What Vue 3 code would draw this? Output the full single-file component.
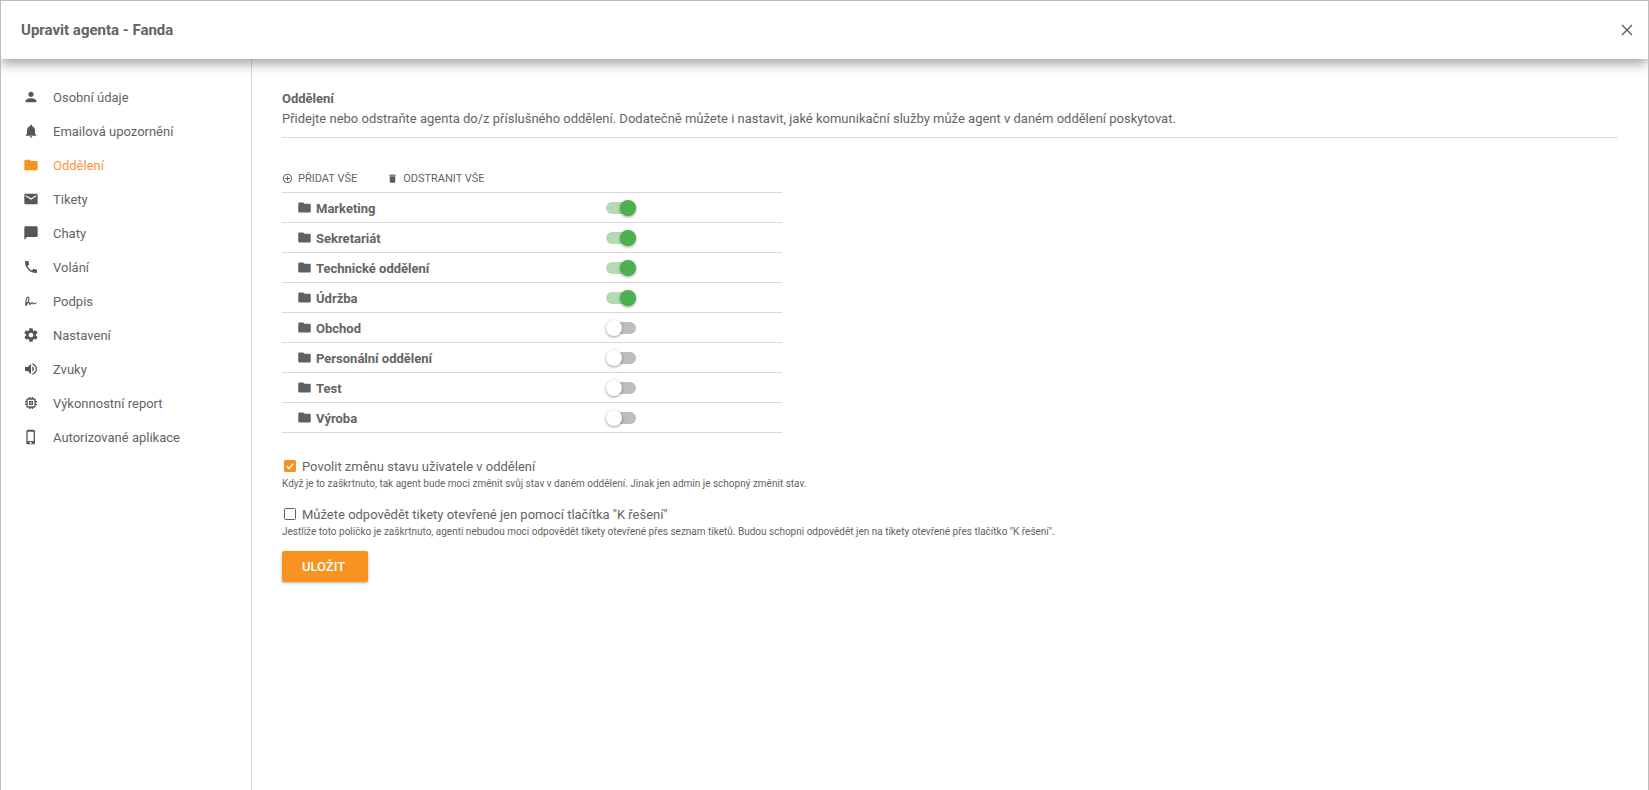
<script setup>
const nav = [
  { label: 'Osobní údaje', d: 'M12 12c2.2 0 4-1.8 4-4s-1.8-4-4-4-4 1.8-4 4 1.8 4 4 4zm0 2c-2.7 0-8 1.3-8 4v2h16v-2c0-2.7-5.3-4-8-4z' },
  { label: 'Emailová upozornění', d: 'M12 22c1.1 0 2-.9 2-2h-4c0 1.1.9 2 2 2zm6-6v-5c0-3.1-1.6-5.6-4.5-6.3V4c0-.8-.7-1.5-1.5-1.5s-1.500.7-1.500 1.500v.7C7.600 5.400 6 7.900 6 11v5l-2 2v1h16v-1l-2-2z' },
  { label: 'Oddělení', active: true, d: 'M10 4H4c-1.100 0-2 .9-2 2v12c0 1.100.9 2 2 2h16c1.100 0 2-.9 2-2V8c0-1.100-.9-2-2-2h-8l-2-2z' },
  { label: 'Tikety', d: 'M20 4H4c-1.100 0-2 .9-2 2v12c0 1.100.9 2 2 2h16c1.100 0 2-.9 2-2V6c0-1.100-.9-2-2-2zm0 4l-8 5-8-5V6l8 5 8-5v2z' },
  { label: 'Chaty', d: 'M20 2H4c-1.100 0-2 .9-2 2v18l4-4h14c1.100 0 2-.9 2-2V4c0-1.100-.9-2-2-2z' },
  { label: 'Volání', d: 'M6.600 10.800c1.400 2.800 3.800 5.100 6.600 6.600l2.200-2.200c.3-.3.7-.4 1-.2 1.100.4 2.300.6 3.600.6.600 0 1 .4 1 1V20c0 .6-.4 1-1 1C10.600 21 3 13.400 3 4c0-.6.4-1 1-1h3.500c.6 0 1 .4 1 1 0 1.300.2 2.500.6 3.600.1.300 0 .7-.2 1l-2.300 2.200z' },
  { label: 'Podpis', stroke: true, d: 'M4 19C4 12 5.500 6 7.500 6c2 0 1.500 6-.5 9.500-1.300 2.300-3 3.500-3 1.500 0-2 4-3.500 5.500-3s-.5 3.500 1 3 2.500-3 3.500-2.500.5 2 2 1.700 2-.7 4-1.200' },
  { label: 'Nastavení', d: 'M19.400 13c0-.3.1-.6.1-1s0-.7-.1-1l2.100-1.600c.2-.2.2-.4.1-.6l-2-3.500c-.1-.2-.4-.3-.6-.2l-2.500 1c-.5-.4-1.100-.7-1.700-1l-.4-2.700c0-.2-.2-.4-.5-.4h-4c-.2 0-.5.2-.5.4l-.4 2.700c-.6.2-1.100.6-1.700 1l-2.500-1c-.2-.1-.5 0-.6.2l-2 3.500c-.1.200-.1.500.1.600L4.500 11c0 .3-.1.700-.1 1s0 .7.1 1l-2.100 1.600c-.2.200-.2.400-.1.600l2 3.500c.1.200.4.300.6.200l2.500-1c.5.400 1.100.7 1.700 1l.4 2.700c0 .2.2.4.5.4h4c.2 0 .5-.2.5-.4l.4-2.700c.6-.2 1.100-.6 1.700-1l2.500 1c.2.100.5 0 .6-.2l2-3.500c.1-.2.1-.4-.1-.6L19.400 13zM12 15.500c-1.900 0-3.500-1.600-3.500-3.500s1.600-3.500 3.500-3.500 3.500 1.600 3.500 3.500-1.600 3.500-3.500 3.500z' },
  { label: 'Zvuky', d: 'M3 9v6h4l5 5V4L7 9H3zm13.500 3c0-1.800-1-3.300-2.500-4v8c1.500-.7 2.500-2.200 2.500-4zM14 3.200v2.100c2.900.9 5 3.500 5 6.700s-2.100 5.800-5 6.700v2.100c4-.9 7-4.500 7-8.800s-3-7.900-7-8.800z' },
  { label: 'Výkonnostní report', d: 'M15 9H9v6h6V9zm-2 4h-2v-2h2v2zm8-2V9h-2V7c0-1.100-.9-2-2-2h-2V3h-2v2h-2V3H9v2H7c-1.100 0-2 .9-2 2v2H3v2h2v2H3v2h2v2c0 1.100.9 2 2 2h2v2h2v-2h2v2h2v-2h2c1.100 0 2-.9 2-2v-2h2v-2h-2v-2h2zm-4 6H7V7h10v10z' },
  { label: 'Autorizované aplikace', d: 'M15.500 1h-8C6.100 1 5 2.100 5 3.500v17C5 21.900 6.100 23 7.500 23h8c1.400 0 2.500-1.100 2.500-2.500v-17C18 2.100 16.900 1 15.500 1zm-4 21c-.8 0-1.500-.7-1.500-1.500s.7-1.500 1.500-1.500 1.500.7 1.500 1.500-.7 1.500-1.500 1.500zm4.500-4H7V4h9v14z' }
]
const departments = [
  { name: 'Marketing', on: true },
  { name: 'Sekretariát', on: true },
  { name: 'Technické oddělení', on: true },
  { name: 'Údržba', on: true },
  { name: 'Obchod', on: false },
  { name: 'Personální oddělení', on: false },
  { name: 'Test', on: false },
  { name: 'Výroba', on: false }
]
const folder = 'M10 4H4c-1.100 0-2 .9-2 2v12c0 1.100.9 2 2 2h16c1.100 0 2-.9 2-2V8c0-1.100-.9-2-2-2h-8l-2-2z'
</script>

<template>
  <div class="dialog">
    <header class="head">
      <h1>Upravit agenta - Fanda</h1>
      <svg class="close" viewBox="0 0 12 12"><path d="M1 1l10 10M11 1L1 11" /></svg>
    </header>
    <div class="body">
      <nav class="side">
        <a v-for="item in nav" :key="item.label" class="nav-item" :class="{ active: item.active }">
          <svg class="nav-icon" viewBox="0 0 24 24">
            <path v-if="item.stroke" :d="item.d" class="sig" />
            <path v-else :d="item.d" />
          </svg>
          <span>{{ item.label }}</span>
        </a>
      </nav>
      <main class="main">
        <h2>Oddělení</h2>
        <p class="desc">Přidejte nebo odstraňte agenta do/z příslušného oddělení. Dodatečně můžete i nastavit, jaké komunikační služby může agent v daném oddělení poskytovat.</p>
        <hr />
        <div class="panel">
          <div class="actions">
            <span class="act">
              <svg viewBox="0 0 24 24"><path d="M13 7h-2v4H7v2h4v4h2v-4h4v-2h-4V7zm-1-5C6.500 2 2 6.500 2 12s4.500 10 10 10 10-4.500 10-10S17.500 2 12 2zm0 18c-4.400 0-8-3.600-8-8s3.600-8 8-8 8 3.600 8 8-3.600 8-8 8z" /></svg>
              PŘIDAT VŠE
            </span>
            <span class="act">
              <svg viewBox="0 0 24 24"><path d="M6 19c0 1.100.9 2 2 2h8c1.100 0 2-.9 2-2V7H6v12zM19 4h-3.500l-1-1h-5l-1 1H5v2h14V4z" /></svg>
              ODSTRANIT VŠE
            </span>
          </div>
          <div v-for="d in departments" :key="d.name" class="row">
            <svg class="folder" viewBox="0 0 24 24"><path :d="folder" /></svg>
            <span class="name">{{ d.name }}</span>
            <span class="toggle" :class="{ on: d.on }"><i></i></span>
          </div>
        </div>
        <div class="check first">
          <span class="box checked">
            <svg viewBox="0 0 14 14"><path d="M3 7.200l2.700 2.700L11 4.300" /></svg>
          </span>
          <span>Povolit změnu stavu uživatele v oddělení</span>
        </div>
        <p class="hint">Když je to zaškrtnuto, tak agent bude moci změnit svůj stav v daném oddělení. Jinak jen admin je schopný změnit stav.</p>
        <div class="check second">
          <span class="box"></span>
          <span>Můžete odpovědět tikety otevřené jen pomocí tlačítka "K řešení"</span>
        </div>
        <p class="hint">Jestliže toto políčko je zaškrtnuto, agenti nebudou moci odpovědět tikety otevřené přes seznam tiketů. Budou schopni odpovědět jen na tikety otevřené přes tlačítko "K řešení".</p>
        <button class="save">ULOŽIT</button>
      </main>
    </div>
  </div>
</template>

<style>
html, body { margin: 0; background: #fff; overflow: hidden; }
</style>

<style scoped>
.dialog {
  box-sizing: border-box;
  width: 1649px;
  height: 790px;
  display: flex;
  flex-direction: column;
  border: 1px solid #bdbdbd;
  border-bottom: 0;
  font-family: Roboto, sans-serif;
  color: #646464;
  background: #fff;
  overflow: hidden;
}
.head {
  position: relative;
  z-index: 2;
  flex: none;
  height: 58px;
  display: flex;
  align-items: center;
  justify-content: space-between;
  padding: 0 15px 0 20px;
  background: #fff;
  box-shadow: 0 4px 12px rgba(0, 0, 0, 0.4);
}
.head h1 { margin: 0; font-size: 15px; font-weight: 700; color: #646464; }
.close { width: 12px; height: 12px; }
.close path { fill: none; stroke: #4f5b66; stroke-width: 1.300; }
.body { flex: 1; display: flex; min-height: 0; }
.side {
  flex: none;
  box-sizing: border-box;
  width: 251px;
  padding-top: 21px;
  border-right: 1px solid #d8d8d8;
}
.nav-item {
  height: 34px;
  display: flex;
  align-items: center;
  padding-left: 22px;
  font-size: 13px;
}
.nav-icon { width: 16px; height: 16px; margin-right: 14px; fill: #565656; flex: none; }
.sig { fill: none; stroke: #565656; stroke-width: 1.700; }
.nav-item.active { color: #f7963e; }
.nav-item.active .nav-icon { fill: #f7931e; }
.main { flex: 1; padding: 31px 30px 0 30px; min-width: 0; }
h2 { margin: 0; font-size: 13px; line-height: 17px; font-weight: 700; color: #646464; }
.desc { margin: 3px 0 0; font-size: 13px; line-height: 18px; }
hr { margin: 9px 0 0; border: 0; border-top: 1px solid #dcdcdc; }
.panel { width: 500px; margin-top: 27px; }
.actions {
  box-sizing: border-box;
  height: 28px;
  display: flex;
  align-items: center;
  gap: 30px;
  border-bottom: 1px solid #d8d8d8;
  font-size: 11px;
}
.act { display: flex; align-items: center; gap: 5px; }
.act svg { width: 11px; height: 11px; fill: #5a5a5a; }
.row {
  box-sizing: border-box;
  height: 30px;
  display: flex;
  align-items: center;
  position: relative;
  border-bottom: 1px solid #d8d8d8;
  padding-left: 15px;
}
.folder { width: 15px; height: 15px; fill: #606060; margin-right: 4px; }
.name { font-size: 13px; font-weight: 700; color: #646464; margin-top: 2px; }
.toggle {
  position: absolute;
  left: 324px;
  top: 9px;
  width: 30px;
  height: 12px;
  border-radius: 6px;
  background: #bdbdbd;
}
.toggle i {
  position: absolute;
  left: 0;
  top: -2px;
  width: 16px;
  height: 16px;
  border-radius: 50%;
  background: #fff;
  box-shadow: 0 1px 3px rgba(0, 0, 0, 0.4);
}
.toggle.on { background: #b3dcb5; }
.toggle.on i { left: 14px; background: #4caf50; }
.check { display: flex; align-items: center; font-size: 13px; height: 18px; padding-left: 2px; }
.check.first { margin-top: 24px; }
.check.second { margin-top: 14px; }
.box {
  box-sizing: border-box;
  width: 12px;
  height: 12px;
  margin-right: 6px;
  border: 1.500px solid #5f5f5f;
  border-radius: 1.500px;
}
.box.checked { background: #f7931e; border: 0; display: flex; }
.box svg { width: 12px; height: 12px; }
.box svg path { fill: none; stroke: #fff; stroke-width: 1.600; }
.hint { margin: 2px 0 0; font-size: 10px; line-height: 14px; }
.save {
  display: block;
  width: 86px;
  height: 31px;
  margin-top: 12px;
  padding: 0 3px 0 0;
  border: 0;
  border-radius: 2px;
  background: #f7931e;
  color: #fff;
  font-family: Roboto, sans-serif;
  font-size: 13px;
  font-weight: 500;
  box-shadow: 0 1px 3px rgba(0, 0, 0, 0.3);
}
</style>
